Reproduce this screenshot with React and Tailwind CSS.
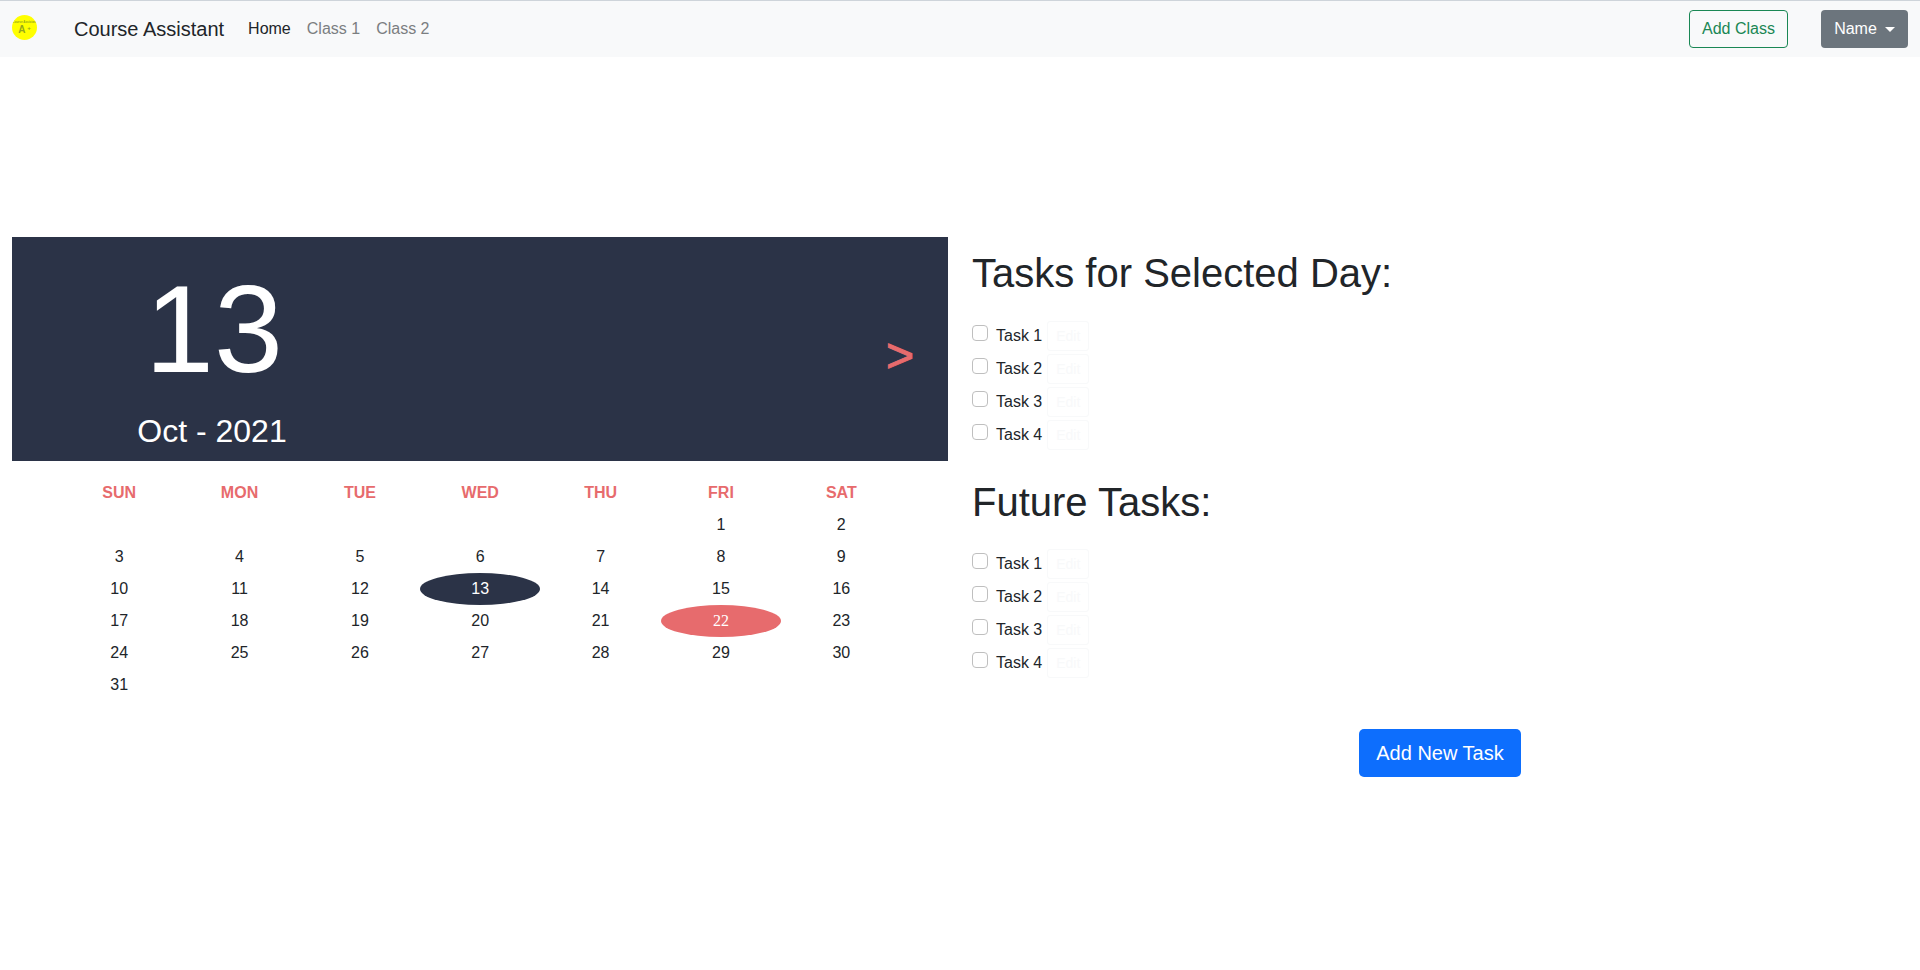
const DIAS = ['SUN', 'MON', 'TUE', 'WED', 'THU', 'FRI', 'SAT']
const SEMANAS = [
  ['', '', '', '', '', 1, 2],
  [3, 4, 5, 6, 7, 8, 9],
  [10, 11, 12, 13, 14, 15, 16],
  [17, 18, 19, 20, 21, 22, 23],
  [24, 25, 26, 27, 28, 29, 30],
  [31, '', '', '', '', '', ''],
]
const TAREFAS = ['Task 1', 'Task 2', 'Task 3', 'Task 4']

function Logo() {
  return (
    <div className="w-[25px] h-[25px] mb-1 rounded-full bg-[#ffff00] flex flex-col items-center justify-center overflow-hidden text-[#96a81c]">
      <span className="text-[3px] leading-[4px] font-bold whitespace-nowrap">Course Assistant</span>
      <span className="flex items-start leading-[9px] font-bold whitespace-nowrap mt-[1px]">
        <span className="text-[10px]">A</span>
        <span className="text-[6px] ml-[2px] leading-[7px]">+</span>
      </span>
    </div>
  )
}

function Dia({ valor }) {
  if (valor === 13) {
    return <div className="h-8 rounded-[50%] bg-[#2b3347] text-white flex items-center justify-center">{valor}</div>
  }
  if (valor === 22) {
    return <div className="h-8 rounded-[50%] bg-[#e76b6d] text-white flex items-center justify-center font-['Liberation_Serif',serif]">{valor}</div>
  }
  return <div className="h-8 flex items-center justify-center">{valor}</div>
}

function ListaTarefas() {
  return (
    <div className="flex flex-col gap-[3px]">
      {TAREFAS.map((t) => (
        <div key={t} className="flex items-center h-[30px]">
          <span className="w-4 h-4 rounded-[4px] border border-[#bfbfbf] bg-white mr-2 mb-1.5" />
          <span className="text-base text-[#212529]">{t}</span>
          <span className="ml-[5px] w-[42px] h-[30px] rounded-[3px] border border-[#f8f9fa] text-[#f8f9fa] text-sm flex items-center justify-center">Edit</span>
        </div>
      ))}
    </div>
  )
}

export default function App() {
  return (
    <div className="min-h-[970px] bg-white text-[#212529] font-['Liberation_Sans',Arial,sans-serif]">

      {/* navbar */}
      <nav className="h-[57px] bg-[#f8f9fa] border-t border-[#ced4da] flex items-center pl-3 pr-3">
        <Logo />
        <span className="ml-[37px] text-xl text-[#212529]">Course Assistant</span>
        <span className="ml-6 text-base text-[#212529]">Home</span>
        <span className="ml-4 text-base text-[#7b7e81]">Class 1</span>
        <span className="ml-4 text-base text-[#7b7e81]">Class 2</span>
        <button className="ml-auto h-[38px] w-[99px] rounded-[4px] border border-[#198754] text-[#198754] text-base">Add Class</button>
        <button className="ml-[33px] h-[38px] w-[87px] rounded-[4px] bg-[#6c757d] text-white text-base flex items-center justify-center">
          Name
          <span className="ml-2 w-0 h-0 border-x-[5px] border-x-transparent border-t-[5px] border-t-white" />
        </button>
      </nav>

      <main className="flex items-start pt-[180px] pl-3">

        {/* calendario */}
        <section className="w-[936px] flex-shrink-0">
          <div className="h-[224px] bg-[#2b3347] text-white flex items-center justify-between">
            <div className="w-[404px] flex flex-col items-center">
              <span className="text-[124px] leading-[124px] mt-[20px]">13</span>
              <span className="text-[32px] leading-[40px] mt-[20px] mr-[4px]">Oct - 2021</span>
            </div>
            <span className="text-[#e76b6d] text-[48px] leading-none mt-[14px] mr-[34px] [-webkit-text-stroke:1px_#e76b6d]">&gt;</span>
          </div>
          <div className="w-[842.5px] ml-[47px] mt-4 text-base">
            <div className="grid grid-cols-7 h-8 items-center text-center font-bold text-[#e76b6d]">
              {DIAS.map((d) => <span key={d}>{d}</span>)}
            </div>
            {SEMANAS.map((semana, i) => (
              <div key={i} className="grid grid-cols-7">
                {semana.map((v, j) => <Dia key={j} valor={v} />)}
              </div>
            ))}
          </div>
        </section>

        {/* tarefas */}
        <section className="ml-6 pt-3">
          <h1 className="text-[40px] leading-[48px]">Tasks for Selected Day:</h1>
          <div className="mt-6"><ListaTarefas /></div>
          <h1 className="text-[40px] leading-[48px] mt-7">Future Tasks:</h1>
          <div className="mt-[23px]"><ListaTarefas /></div>
          <button className="block ml-[387px] mt-[51px] h-[48px] w-[162px] rounded-[5px] bg-[#0d6efd] text-white text-xl">Add New Task</button>
        </section>
      </main>
    </div>
  )
}
